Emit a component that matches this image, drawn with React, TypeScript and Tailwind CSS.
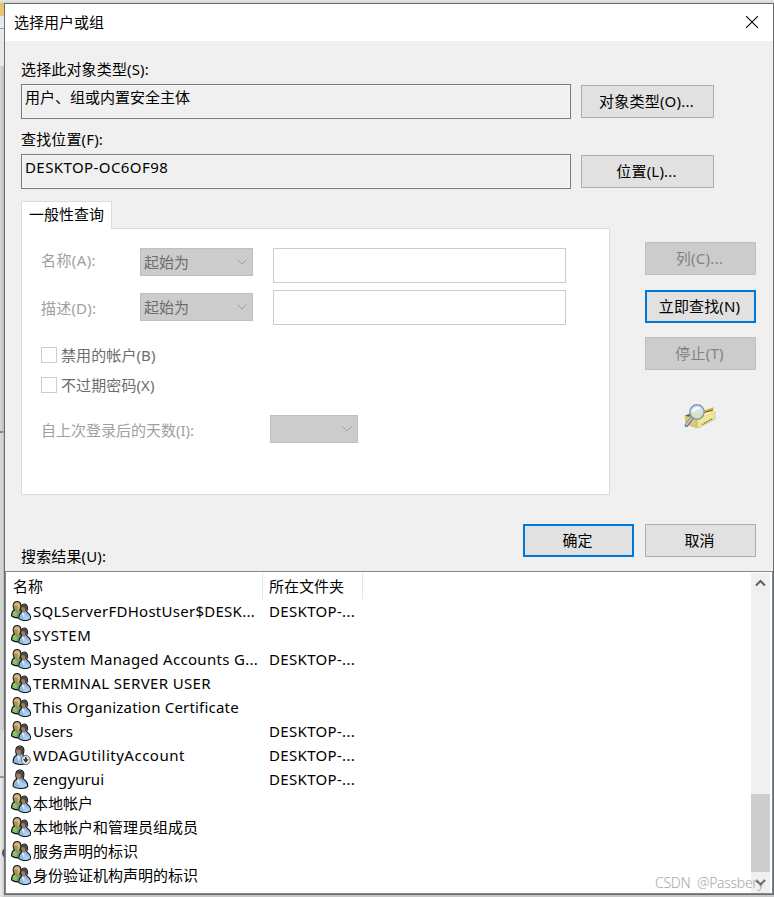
import type { ReactNode } from "react";
import clsx from "clsx";

type IconKind = "group" | "user" | "disabled";

interface ResultRow {
  name: string;
  folder?: string;
  icon: IconKind;
  tracking?: string;
}

const results: ResultRow[] = [
  { name: "SQLServerFDHostUser$DESK...", folder: "DESKTOP-...", icon: "group", tracking: "tracking-[0.27px]" },
  { name: "SYSTEM", icon: "group", tracking: "tracking-[0.5px]" },
  { name: "System Managed Accounts G...", folder: "DESKTOP-...", icon: "group", tracking: "tracking-[0.31px]" },
  { name: "TERMINAL SERVER USER", icon: "group", tracking: "tracking-[0.36px]" },
  { name: "This Organization Certificate", icon: "group", tracking: "tracking-[0.2px]" },
  { name: "Users", folder: "DESKTOP-...", icon: "group" },
  { name: "WDAGUtilityAccount", folder: "DESKTOP-...", icon: "disabled", tracking: "tracking-[0.5px]" },
  { name: "zengyurui", folder: "DESKTOP-...", icon: "user", tracking: "tracking-[0.1px]" },
  { name: "本地帐户", icon: "group" },
  { name: "本地帐户和管理员组成员", icon: "group" },
  { name: "服务声明的标识", icon: "group" },
  { name: "身份验证机构声明的标识", icon: "group" },
];

function Person() {
  return (
    <g>
      <path d="M1.2 17C1 13.5 1.8 11 5 9.8C3.2 7.5 3 .7 7.8 .7C12.3 .7 12.6 5.5 10.8 9.5C14 11.2 16 14.2 15.6 17.2C12.5 19.8 4 19.8 1.2 17Z" fill="#8db6df" stroke="#14181e" strokeWidth="1.2" strokeLinejoin="round" />
      <path d="M8.5 12L14.8 15.5V17C12 18.8 8.6 18.6 6.5 18.4Z" fill="#a9cff2" />
      <path d="M4.4 5C4.3 2.4 5.7 1.2 7.8 1.2C11.4 1.2 11.9 5.2 10.3 8.6L8 9.5L4.8 7Z" fill="#4c4541" />
      <path d="M4.5 4.2L8.5 4.6C9.3 7 9 9 7.5 10.2C5.4 9.6 4 7.2 4.5 4.2Z" fill="#a97a55" />
      <path d="M4.8 10.5L6.3 10L8 12.3L6.5 16.5Z" fill="#dceaf6" />
    </g>
  );
}

function AccountIcon({ kind }: { kind: IconKind }) {
  return (
    <svg width="20" height="20" viewBox="0 0 20 20" className="shrink-0">
      {kind === "group" ? (
        <>
          <path d="M.7 15C.5 11.8 1 10 3.4 9C1.7 6.4 1.6 .7 6 .7C10.2 .7 10.6 5 9 8.8L12 11V16C8 17.2 3 17 .7 15Z" fill="#74a455" stroke="#111" strokeWidth="1.2" strokeLinejoin="round" />
          <path d="M2.8 5C2.6 2.4 3.8 1.2 6 1.2C9.3 1.2 9.9 4.8 8.6 8L6.5 9.2L3 6.8Z" fill="#c9ba7b" />
          <path d="M2.9 4.6L6.4 4.8C7.3 6.6 7 8.6 5.9 9.5C3.9 9.1 2.6 7 2.9 4.6Z" fill="#bb8860" />
          <path d="M2 11L3.8 9.8L6.4 12.4L5 15.7L1.6 14.4Z" fill="#92bd70" />
          <g transform="translate(6.9 2.3) scale(.81 .9)">
            <Person />
          </g>
        </>
      ) : (
        <g transform="translate(1 .3)">
          <Person />
        </g>
      )}
      {kind === "disabled" && (
        <g>
          <circle cx="14.8" cy="15" r="4.5" fill="#e4e4e4" stroke="#666" />
          <path d="M13.9 12.2h1.8v2.1h2.1L14.8 17.8l-3-3.5h2.1Z" fill="#333" />
        </g>
      )}
    </svg>
  );
}

function SearchFolderIcon() {
  return (
    <svg width="33" height="28" viewBox="0 0 33 28">
      <path d="M1 12.5L13 16V25L2 21Z" fill="#d7ca74" stroke="#c3b45c" strokeWidth=".6" />
      <path d="M13 16L31 8.5V16L14 25Z" fill="#eee69a" stroke="#c9bb63" strokeWidth=".7" />
      <path d="M1 12.5L14 8L22 9.5L30 7L31 8.5L13 16Z" fill="#faf5ba" />
      <path d="M1 12.5L6 10.5L7 13.5L4 13.8Z" fill="#7d6a22" />
      <path d="M17 8.5L30 4.2L28.5 7.8L20 10Z" fill="#dba51f" />
      <path d="M18 10L29 7.4" stroke="#7a6520" />
      <path d="M18 21.5L29 15.5" stroke="#82793b" strokeWidth="1.4" strokeDasharray="1.5 1" />
      <path d="M8 15L2.5 22.3" stroke="#71777d" strokeWidth="3.6" strokeLinecap="round" />
      <path d="M7.7 15L2.5 21.8" stroke="#c5ccd3" strokeWidth="1.6" strokeLinecap="round" />
      <circle cx="13" cy="9" r="7.2" fill="#c8e4f2" fillOpacity=".88" stroke="#8497ab" strokeWidth="1.4" />
      <path d="M7.5 12L18.5 9.3C18 13 14 15.4 10.8 14.5Z" fill="#e5e0aa" />
      <path d="M8 7.5C9.5 3.8 14 3 17 5.2L9 9Z" fill="#eef9ff" />
    </svg>
  );
}

function DialogButton({
  children,
  className,
  disabled,
  primary,
}: {
  children: ReactNode;
  className?: string;
  disabled?: boolean;
  primary?: boolean;
}) {
  return (
    <button
      disabled={disabled}
      className={clsx(
        "flex h-[33px] shrink-0 items-center justify-center pr-[2px] pb-[2px] whitespace-nowrap",
        primary && "border-2 border-[#0078d7] bg-[#e1e1e1]",
        disabled && "border border-[#bfbfbf] bg-[#cccccc] text-[#838383]",
        !primary && !disabled && "border border-[#adadad] bg-[#e1e1e1]",
        className ?? "w-[111px]",
      )}
    >
      {children}
    </button>
  );
}

function DisabledSelect({ label, className }: { label?: string; className: string }) {
  return (
    <div
      className={clsx(
        "flex h-7 shrink-0 items-center justify-between border border-[#bfbfbf] bg-[#cccccc] pr-[5px] pl-[3px] text-[#6d6d6d]",
        className,
      )}
    >
      <span>{label}</span>
      <svg width="10" height="6" viewBox="0 0 10 6" fill="none" stroke="#a0a0a0">
        <path d="M.5 .5L5 5L9.5 .5" />
      </svg>
    </div>
  );
}

function FieldRow({
  label,
  value,
  button,
}: {
  label: string;
  value: string;
  button: string;
}) {
  return (
    <div className="h-[70px]">
      <div className="flex h-[27px] items-center pb-[4px] tracking-[0.15px]">{label}</div>
      <div className="flex items-center gap-2.5">
        <div className="h-[35px] w-[550px] border border-[#7a7a7a] pt-px pl-[3px] shadow-[inset_0_0_0_1px_#f8f8f8]">
          <span className={clsx(value.startsWith("DESKTOP") && "tracking-[0.42px]")}>{value}</span>
        </div>
        <DialogButton className="w-[133px] tracking-[0.2px]">{button}</DialogButton>
      </div>
    </div>
  );
}

function QueryPanel() {
  return (
    <div className="w-[589px]">
      <div className="relative z-10 flex h-7 w-[91px] items-center justify-center border border-b-0 border-[#dcdcdc] bg-white pb-[3px]">
        一般性查询
      </div>
      <div className="-mt-px h-[267px] border border-[#dcdcdc] bg-white pt-[19px] pl-[19px]">
        <div className="flex h-[42px] items-start">
          <span className="w-[99px] pt-[1px] tracking-[0.4px] text-[#a0a0a0]">名称(A):</span>
          <DisabledSelect label="起始为" className="w-[113px]" />
          <div className="ml-5 h-[35px] w-[293px] border border-[#cccccc]" />
        </div>
        <div className="flex h-[57px] items-start">
          <span className="w-[99px] pt-[7px] tracking-[0.2px] text-[#a0a0a0]">描述(D):</span>
          <DisabledSelect label="起始为" className="mt-[3px] w-[113px]" />
          <div className="ml-5 h-[35px] w-[293px] border border-[#cccccc]" />
        </div>
        {["禁用的帐户(B)", "不过期密码(X)"].map((text) => (
          <div key={text} className="flex h-[30px] items-start text-[#6d6d6d]">
            <span className="mr-1 size-4 border border-[#cccccc]" />
            <span className="-mt-[3px] tracking-[0.1px]">{text}</span>
          </div>
        ))}
        <div className="mt-2 flex items-center">
          <span className="w-[229px] pt-[2px] text-[#a0a0a0]">自上次登录后的天数(I):</span>
          <DisabledSelect className="w-[88px]" />
        </div>
      </div>
    </div>
  );
}

function ResultList() {
  return (
    <div className="flex h-[323px] border border-[#828790] bg-white">
      <div className="w-[745px] pt-px">
        <div className="flex h-[26px] items-center">
          <div className="flex h-full w-[257px] items-center border-r border-[#e5e5e5] pl-[7px]">名称</div>
          <div className="flex h-full w-[100px] items-center border-r border-[#e5e5e5] pl-[6px]">所在文件夹</div>
        </div>
        {results.map(({ name, folder, icon, tracking }) => (
          <div key={name} className="flex h-6 items-center pl-[5px]">
            <AccountIcon kind={icon} />
            <span className={clsx("w-[238px] pl-[2px] whitespace-nowrap", tracking)}>{name}</span>
            <span className="tracking-[0.33px]">{folder}</span>
          </div>
        ))}
      </div>
      <div className="mt-px flex w-[19px] flex-col items-center bg-[#f0f0f0]">
        <svg width="19" height="20" viewBox="0 0 19 20" fill="none" stroke="#606060" strokeWidth="2">
          <path d="M5 12.5L9.5 8L14 12.5" />
        </svg>
        <div className="mt-[201px] h-[78px] w-full bg-[#cdcdcd]" />
        <svg width="19" height="20" viewBox="0 0 19 20" fill="none" stroke="#505050" strokeWidth="2">
          <path d="M5 8L9.5 12.5L14 8" />
        </svg>
      </div>
    </div>
  );
}

// Slivers of the windows that sit behind the dialog
function BackgroundEdge() {
  return (
    <div className="flex w-1 shrink-0 flex-col">
      <div className="h-[13px] bg-[#e6c574]" />
      <div className="h-[12px] bg-[#e9e9e9]" />
      <div className="h-[38px] border-t border-[#a0a0a0] bg-[#e8e8e8]" />
      <div className="h-[365px] bg-gradient-to-r from-[#d9d9d9] to-[#bcbcbc]" />
      <div className="h-[299px] border-t-2 border-r border-t-[#888888] border-r-[#bdbdbd] bg-[#d4d4d4]" />
      <div className="h-[48px] border-b-2 border-[#999999] bg-[#dedede]" />
      <div className="flex-1 overflow-hidden bg-gradient-to-r from-[#ededed] to-[#cfcfcf] pt-[69px] pl-[2px]">
        <div className="size-3 rounded-full bg-[#555555]" />
      </div>
    </div>
  );
}

export default function App() {
  return (
    <div className="relative flex h-[897px] w-[774px] flex-col overflow-hidden bg-[#c8c8c8] font-['Noto_Sans','Noto_Sans_CJK_SC',sans-serif] text-[15px] leading-[22px] text-black">
      <div className="h-[3px] shrink-0 bg-gradient-to-b from-[#e8e8e8] to-[#d0d0d0]" />
      <div className="flex min-h-0 flex-1">
        <BackgroundEdge />
        <div className="h-[892px] w-[770px] border border-[#6c6c6c] bg-[#f0f0f0]">
          <div className="flex h-[37px] items-center justify-between bg-white pr-[15px] pl-[9px]">
            <span className="pb-[2px]">选择用户或组</span>
            <svg width="12" height="12" viewBox="0 0 12 12" className="-mt-[2px]" stroke="black" strokeWidth="1.1">
              <path d="M0 0L12 12M12 0L0 12" />
            </svg>
          </div>
          <div className="h-[530px] pt-4 pl-4">
            <FieldRow label="选择此对象类型(S):" value="用户、组或内置安全主体" button="对象类型(O)..." />
            <FieldRow label="查找位置(F):" value="DESKTOP-OC6OF98" button="位置(L)..." />
            <div className="mt-1 flex h-[323px] items-start gap-[35px]">
              <QueryPanel />
              <div className="flex flex-col items-center pt-[41px]">
                <DialogButton disabled className="w-[111px] tracking-[0.3px]">列(C)...</DialogButton>
                <DialogButton primary className="mt-[15px] w-[111px] tracking-[0.15px]">立即查找(N)</DialogButton>
                <DialogButton disabled className="mt-[14px] mb-[33px] w-[111px] tracking-[0.2px]">停止(T)</DialogButton>
                <SearchFolderIcon />
              </div>
            </div>
            <div className="flex h-[47px] justify-between pr-[17px]">
              <span className="pt-[21px] tracking-[0.15px]">搜索结果(U):</span>
              <div className="flex gap-[11px]">
                <DialogButton primary>确定</DialogButton>
                <DialogButton>取消</DialogButton>
              </div>
            </div>
          </div>
          <ResultList />
        </div>
      </div>
      <div className="absolute top-[872px] left-[655px] text-[14px] font-light tracking-[-0.3px] whitespace-pre text-[#a8a8a8]">CSDN  @Passbery</div>
    </div>
  );
}
